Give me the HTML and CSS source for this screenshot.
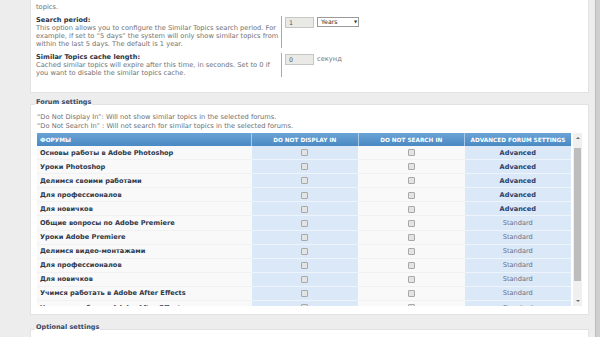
FILE: index.html
```html
<!DOCTYPE html>
<html lang="ru">
  <head>
    <meta charset="UTF-8" />
    <meta name="viewport" content="width=device-width, initial-scale=1.0" />
    <title>Similar Topics</title>
    <link rel="stylesheet" href="styles.css">
  </head>
  <body>
    <div class="main">
      <div class="panel top">
        <div class="cut">topics.</div>
        <dl>
          <dt>
            <label>Search period:</label>
            <span>This option allows you to configure the Similar Topics search period. For<br>example, if set to “5 days” the system will only show similar topics from<br>within the last 5 days. The default is 1 year.</span>
          </dt>
          <dd>
            <span class="field">1</span>
            <span class="select">Years <i>▼</i></span>
          </dd>
        </dl>
        <dl>
          <dt>
            <label>Similar Topics cache length:</label>
            <span>Cached similar topics will expire after this time, in seconds. Set to 0 if<br>you want to disable the similar topics cache.</span>
          </dt>
          <dd>
            <span class="field">0</span>
            <span class="unit">секунд</span>
          </dd>
        </dl>
      </div>

      <fieldset class="panel">
        <legend>Forum settings</legend>
        <p class="intro">“Do Not Display In”: Will not show similar topics in the selected forums.<br>“Do Not Search In” : Will not search for similar topics in the selected forums.</p>
        <div class="scrollbox">
          <div class="tablewrap">
            <table class="forums">
              <thead>
                <tr>
                  <th class="name">Форумы</th>
                  <th>Do not display in</th>
                  <th>Do not search in</th>
                  <th>Advanced forum settings</th>
                </tr>
              </thead>
              <tbody id="rows"></tbody>
            </table>
          </div>
          <div class="vscroll">
            <div class="arrow up"></div>
            <div class="track"><div class="thumb"></div></div>
            <div class="arrow down"></div>
          </div>
        </div>
      </fieldset>

      <fieldset class="panel last">
        <legend>Optional settings</legend>
      </fieldset>
    </div>
    <div class="winbar"></div>

    <script>
      const forums = [
        ["Основы работы в Adobe Photoshop", true],
        ["Уроки Photoshop", true],
        ["Делимся своими работами", true],
        ["Для профессионалов", true],
        ["Для новичков", true],
        ["Общие вопросы по Adobe Premiere", false],
        ["Уроки Adobe Premiere", false],
        ["Делимся видео-монтажами", false],
        ["Для профессионалов", false],
        ["Для новичков", false],
        ["Учимся работать в Adobe After Effects", false],
        ["Уроки по работе с Adobe After Effects", false]
      ];

      const tbody = document.getElementById("rows");
      forums.forEach(function (f) {
        const tr = document.createElement("tr");
        tr.innerHTML =
          '<td class="name">' + f[0] + '</td>' +
          '<td class="blue"><span class="check"></span></td>' +
          '<td><span class="check"></span></td>' +
          '<td class="blue">' +
          (f[1] ? '<b class="adv">Advanced</b>' : '<span class="std">Standard</span>') +
          '</td>';
        tbody.appendChild(tr);
      });
    </script>
  </body>
</html>
```

FILE: styles.css
```css
body,
html {
  height: 100%;
  margin: 0;
  overflow: hidden;
}
body {
  display: flex;
  background: #ededed;
  font-family: "DejaVu Sans", Verdana, sans-serif;
  font-size: 6.7px;
  line-height: 8px;
  color: #727272;
}
.main {
  flex: 1;
  padding: 0 6px 0 30px;
}
.winbar {
  width: 4px;
  background: #cfcfcf;
  border-left: 1px solid #bdbdbd;
}

.panel {
  background: #fff;
  border: 1px solid #e2e2e2;
}
.top {
  border-top: none;
  padding: 3px 5px 10px;
}
.cut {
  margin-bottom: 5px;
}
dl {
  display: grid;
  grid-template-columns: 246px 1fr;
  margin: 0 0 5px;
}
dt {
  border-right: 1px solid #a9a9a9;
  padding-right: 2px;
  white-space: nowrap;
}
dt label {
  display: block;
  font-weight: bold;
  font-size: 6.6px;
  color: #2e3340;
}
dd {
  margin: 0;
  padding: 1px 0 0 3px;
  display: flex;
  align-items: flex-start;
  gap: 3px;
}
.field {
  width: 24px;
  height: 9px;
  line-height: 9px;
  padding-left: 3px;
  background: #e9e9e5;
  border: 1px solid #c6c6c2;
  font-size: 6.3px;
  color: #555;
}
.select {
  width: 36px;
  height: 8px;
  line-height: 8px;
  padding: 0 1px 0 3px;
  border: 1px solid #9a9a9a;
  display: flex;
  justify-content: space-between;
  font-size: 6.3px;
  color: #333;
}
.select i {
  font-style: normal;
  font-size: 4px;
}
.unit {
  padding-top: 1px;
  color: #777;
}

fieldset.panel {
  margin: 5px 0 0;
  padding: 0 6px 8px;
  min-width: 0;
}
legend {
  padding: 0 1px 4px;
  margin-left: -2px;
  font-weight: bold;
  font-size: 6.5px;
  color: #3a4866;
}
.intro {
  margin: 0 0 2px;
  padding-top: 3px;
  line-height: 9px;
  color: #707070;
}

.scrollbox {
  display: flex;
  gap: 2px;
  height: 173px;
}
.tablewrap {
  flex: 0 0 534px;
  overflow: hidden;
}
.forums {
  width: 534px;
  border-collapse: collapse;
  table-layout: fixed;
}
.forums th {
  height: 13px;
  padding: 0;
  background: linear-gradient(#6aa3d6, #4a89c3);
  border-left: 1px solid #a9c9e8;
  color: #fff;
  font-size: 5.75px;
  text-transform: uppercase;
  text-align: center;
}
.forums th.name {
  width: 211px;
  border-left: none;
  text-align: left;
  padding-left: 3px;
}
.forums td {
  height: 13.1px;
  padding: 0;
  text-align: center;
  background: #f9f9f9;
  border-bottom: 1px solid #f1f1f1;
}
.forums td.name {
  text-align: left;
  padding-left: 3px;
  font-weight: bold;
  font-size: 6.6px;
  color: #2f3849;
  white-space: nowrap;
}
.forums td.blue {
  background: #dbe8f8;
  border-bottom-color: #eef4fc;
}
.check {
  display: inline-block;
  width: 5px;
  height: 5px;
  border: 1px solid #a8a8a8;
  border-radius: 1px;
  background: #e4e4e4;
  vertical-align: middle;
}
.adv {
  font-size: 6.6px;
  color: #29406b;
}
.std {
  font-size: 6.6px;
  color: #62718a;
}

.vscroll {
  width: 9px;
  display: flex;
  flex-direction: column;
  background: #f0f0f0;
}
.arrow {
  height: 10px;
  display: flex;
  justify-content: center;
  align-items: center;
}
.arrow::before {
  content: "";
  border-left: 2px solid transparent;
  border-right: 2px solid transparent;
}
.arrow.up::before {
  border-bottom: 2px solid #6a6a6a;
}
.arrow.down::before {
  border-top: 2px solid #6a6a6a;
}
.track {
  flex: 1;
  padding: 5px 1px 0;
}
.thumb {
  height: 133px;
  background: #bdbdbd;
}

.last {
  margin-top: 8px !important;
  height: 200px;
}
```
